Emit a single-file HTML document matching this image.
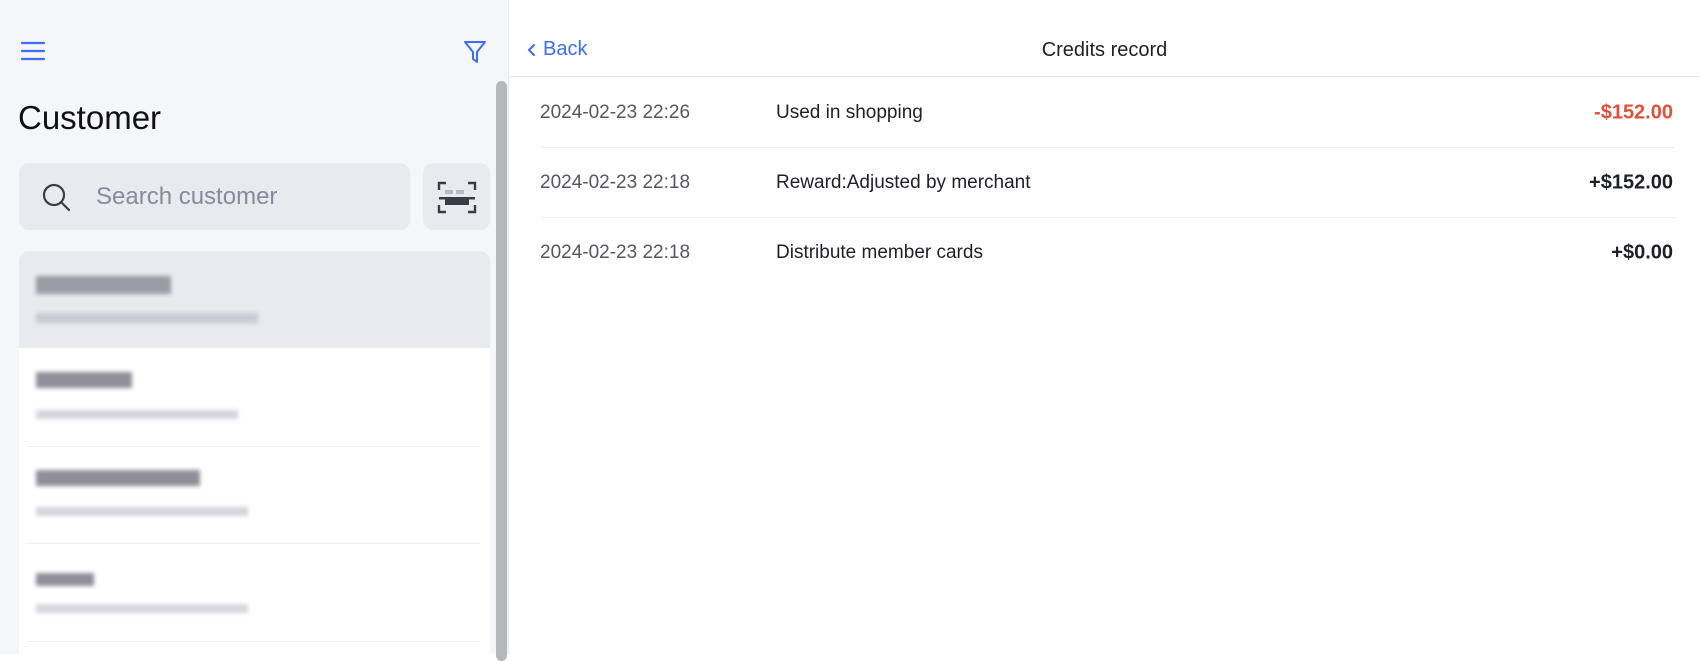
<!DOCTYPE html>
<html><head><meta charset="utf-8"><style>
*{margin:0;padding:0;box-sizing:border-box}
body{width:1700px;height:654px;overflow:hidden;font-family:"Liberation Sans",sans-serif;background:#fff;position:relative}
.left{position:absolute;left:0;top:0;width:509px;height:654px;background:#f5f6fa;border-right:1px solid #e6e7ec}
.abs{position:absolute}
.blur{position:absolute;filter:blur(2px)}
.sep{position:absolute;left:27px;width:453px;height:1px;background:#ebecf2}
.right{position:absolute;left:509px;top:0;width:1191px;height:654px;background:#fff}
.row{position:absolute;left:31px;right:27px;height:70px;font-size:19px}
.row .d{position:absolute;left:0;top:50%;transform:translateY(-50%);color:#55575e}
.row .t{position:absolute;left:236px;top:50%;transform:translateY(-50%);color:#1e2028}
.row .a{position:absolute;right:0;top:50%;transform:translateY(-50%);font-weight:bold;color:#1e2028;font-size:20px}
.rs{position:absolute;left:31px;right:26px;height:1px;background:#ebecf2}
</style></head><body>
<div class="left">
  <svg class="abs" style="left:20px;top:40px" width="26" height="22" viewBox="0 0 26 22"><g stroke="#3b6ef0" stroke-width="2.2" stroke-linecap="round"><line x1="2" y1="3" x2="24" y2="3"/><line x1="2" y1="11" x2="24" y2="11"/><line x1="2" y1="19" x2="24" y2="19"/></g></svg>
  <svg class="abs" style="left:462px;top:39px" width="26" height="26" viewBox="0 0 26 26"><path d="M3 3 H23 L15 13 V23 L11 20 V13 Z" fill="none" stroke="#3b6ef0" stroke-width="2" stroke-linejoin="round"/></svg>
  <div class="abs" style="left:18px;top:99px;font-size:33px;color:#111">Customer</div>
  <div class="abs" style="left:19px;top:163px;width:391px;height:67px;background:#e9eaef;border-radius:10px"></div>
  <svg class="abs" style="left:40px;top:181px" width="32" height="32" viewBox="0 0 32 32"><circle cx="14" cy="14" r="10" fill="none" stroke="#3a3d45" stroke-width="2.2"/><line x1="21.5" y1="21.5" x2="29" y2="29" stroke="#3a3d45" stroke-width="2.2" stroke-linecap="round"/></svg>
  <div class="abs" style="left:96px;top:183px;font-size:24px;color:#868b9b">Search customer</div>
  <div class="abs" style="left:423px;top:163px;width:67px;height:67px;background:#e9eaef;border-radius:10px"></div>
  <svg class="abs" style="left:437px;top:181px" width="40" height="33" viewBox="0 0 40 33"><g fill="none" stroke="#3a3d45" stroke-width="2.4"><path d="M2 9V2H9"/><path d="M31 2H38V9"/><path d="M2 24V31H9"/><path d="M31 31H38V24"/></g><rect x="8" y="9" width="8" height="4" fill="#b5b9c4"/><rect x="19" y="9" width="8" height="4" fill="#b5b9c4"/><rect x="2" y="16" width="36" height="2.5" fill="#3a3d45"/><rect x="8" y="18" width="24" height="6" fill="#3a3d45"/></svg>
  <div class="abs" style="left:19px;top:251px;width:471px;height:403px;background:#fff;border-radius:10px 10px 0 0;overflow:hidden">
    <div class="abs" style="left:0;top:0;width:471px;height:97px;background:#e9eaef"></div>
  </div>
  <div class="blur" style="left:36px;top:276px;width:135px;height:18px;background:#9a9ba5"></div>
  <div class="blur" style="left:36px;top:313px;width:222px;height:10px;background:#c9cad3"></div>
  <div class="blur" style="left:36px;top:372px;width:96px;height:16px;background:#8e8f98"></div>
  <div class="blur" style="left:36px;top:410px;width:202px;height:9px;background:#d3d4dc"></div>
  <div class="sep" style="top:446px"></div>
  <div class="blur" style="left:36px;top:470px;width:164px;height:16px;background:#8e8f98"></div>
  <div class="blur" style="left:36px;top:507px;width:212px;height:9px;background:#d3d4dc"></div>
  <div class="sep" style="top:543px"></div>
  <div class="blur" style="left:36px;top:573px;width:58px;height:13px;background:#8e8f98"></div>
  <div class="blur" style="left:36px;top:604px;width:212px;height:9px;background:#d5d6de"></div>
  <div class="sep" style="top:641px"></div>
  <div class="abs" style="left:496px;top:81px;width:11px;height:580px;background:#b6b7ba;border-radius:6px"></div>
</div>
<div class="right">
  <div class="abs" style="left:0;top:76px;width:1191px;height:1px;background:#e6e7ec"></div>
  <svg class="abs" style="left:17px;top:42px" width="12" height="16" viewBox="0 0 12 16"><path d="M8 3 L3 8 L8 13" fill="none" stroke="#3b6ef0" stroke-width="2" stroke-linecap="round" stroke-linejoin="round"/></svg>
  <div class="abs" style="left:34px;top:38px;font-size:20px;color:#3b6ef0">Back</div>
  <div class="abs" style="left:0;width:1191px;top:39px;text-align:center;font-size:20px;color:#1e2028">Credits record</div>
  <div class="row" style="top:78px"><span class="d">2024-02-23 22:26</span><span class="t">Used in shopping</span><span class="a" style="color:#e0513a">-$152.00</span></div>
  <div class="rs" style="top:147px"></div>
  <div class="row" style="top:148px"><span class="d">2024-02-23 22:18</span><span class="t">Reward:Adjusted by merchant</span><span class="a">+$152.00</span></div>
  <div class="rs" style="top:217px"></div>
  <div class="row" style="top:218px"><span class="d">2024-02-23 22:18</span><span class="t">Distribute member cards</span><span class="a">+$0.00</span></div>
</div>
</body></html>
